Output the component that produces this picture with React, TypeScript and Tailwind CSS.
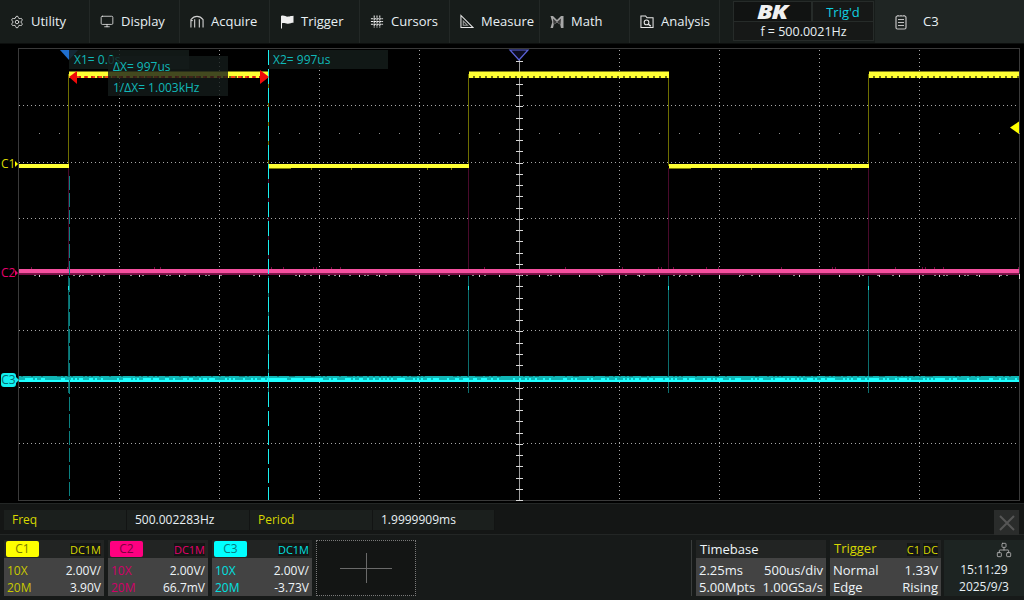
import React from 'react';
import { Settings, Monitor, Network } from 'lucide-react';

const noise = (i: number, seed: number) => {
  const v = Math.sin(i * 12.9898 + seed * 78.233) * 43758.5453;
  return v - Math.floor(v);
};

const range = (from: number, to: number, step: number) => {
  const out: number[] = [];
  for (let v = from; v <= to; v += step) out.push(v);
  return out;
};

const EDGES = [69, 269, 469, 669, 869];
const HIGH = [[69, 269], [469, 669], [869, 1019]];
const LOW = [[19, 69], [269, 469], [669, 869]];

// scope trace area, drawn in screen coordinates
function Scope() {
  return (
    <svg width="1024" height="459" viewBox="0 44 1024 459" className="block">
      <rect x="18.5" y="48.5" width="1001" height="452" fill="none" stroke="#3a3a3a" />
      {[105.5, 162.5, 218.5, 330.5, 387.5, 443.5].map((y) => (
        <line key={y} x1="19" x2="1019" y1={y} y2={y} stroke="#a8a8a8" strokeDasharray="1 3" />
      ))}
      {[119, 219, 319, 419, 619, 719, 819, 919].map((x) => (
        <line key={x} x1={x + 0.5} x2={x + 0.5} y1="50" y2="500" stroke="#a8a8a8" strokeDasharray="1 3" />
      ))}
      {range(39, 1019, 20).map((x) => (
        <rect key={x} x={x} y="133" width="1" height="1" fill="#8a8a8a" />
      ))}

      {/* centre axes */}
      <line x1="519.5" x2="519.5" y1="50" y2="500" stroke="#9c9c9c" />
      {range(50, 500, 11.25).map((y) => (
        <line key={y} x1="516" x2="523" y1={Math.round(y) + 0.5} y2={Math.round(y) + 0.5} stroke="#d8d8d8" />
      ))}
      {range(39, 1019, 20).map((x) => (
        <line key={x} x1={x + 0.5} x2={x + 0.5} y1="274" y2={(x - 19) % 100 === 0 ? 279 : 277} stroke="#d8d8d8" />
      ))}

      {/* coupling from the square wave edges */}
      {EDGES.map((x) => (
        <g key={x}>
          <line x1={x - 0.5} x2={x - 0.5} y1="74" y2="166" stroke="#6e6e00" />
          <line x1={x - 0.5} x2={x - 0.5} y1="168" y2="270" stroke="#4a0a2c" />
          <line x1={x - 0.5} x2={x - 0.5} y1="276" y2="393" stroke="#0b6e6e" />
          <line x1={x - 0.5} x2={x - 0.5} y1="286" y2="290" stroke="#19e8e8" />
        </g>
      ))}

      {/* C1 */}
      {HIGH.map(([a, b]) => (
        <g key={a}>
          <rect x={a} y="71.500" width={b - a} height="4.500" fill="#ffff33" />
          <rect x={a} y="76" width={b - a} height="2" fill="#6e6e10" />
          <line x1={a} x2={b} y1="77" y2="77" stroke="#ffff33" strokeWidth="2" strokeDasharray="4 2" />
        </g>
      ))}
      {LOW.map(([a, b], i) => (
        <g key={a}>
          <rect x={a} y="164" width={b - a} height="4" fill="#ffff33" />
          {i > 0 && <rect x={a} y="168" width="22" height="1" fill="#7d7d00" />}
          {i > 0 && range(a + 24, b - 2, 2).map((x, k) =>
            noise(k, 5) > 0.96 ? <rect key={x} x={x} y="168" width="1" height="2" fill="#7d7d00" /> : null,
          )}
        </g>
      ))}

      {/* C2 */}
      <rect x="19" y="269" width="1000" height="4.5" fill="#f5509f" />
      <rect x="19" y="273.5" width="1000" height="1.5" fill="#7a0b45" />
      {range(19, 1019, 3).map((x, i) =>
        noise(i, 1) > 0.82 ? <rect key={x} x={x} y="275" width="2" height="1" fill="#8a8a8a" /> : null,
      )}
      {range(19, 1019, 3).map((x, i) =>
        noise(i, 2) > 0.93 ? <rect key={x} x={x} y="267" width="1" height="2" fill="#7a0b45" /> : null,
      )}

      {/* C3 */}
      <rect x="19" y="376" width="1000" height="4" fill="#10b5b5" />
      <rect x="19" y="380" width="1000" height="2" fill="#1dffff" />
      {range(19, 1019, 2).map((x, i) =>
        noise(i, 3) > 0.55 ? <rect key={x} x={x} y="378" width="2" height="2" fill="#1dffff" /> : null,
      )}
      {range(19, 1019, 2).map((x, i) =>
        noise(i, 4) > 0.7 ? <rect key={x} x={x} y="376" width="2" height="1" fill="#0b7d7d" /> : null,
      )}

      {/* cursors */}
      <line x1="69.5" x2="69.5" y1="176" y2="500" stroke="#0a8080" strokeDasharray="14 3" />
      <line x1="268.5" x2="268.5" y1="50" y2="500" stroke="#19f0f0" strokeDasharray="15 4" />
      <line x1="77" x2="260" y1="77" y2="77" stroke="#f01010" strokeWidth="1.5" strokeDasharray="4 3" />
      <polygon points="69,77 77,71 77,84" fill="#f00a0a" />
      <polygon points="269,77 260,70 260,84" fill="#f00a0a" />

      {/* markers */}
      <polygon points="60,50 78,50 69,60" fill="#1f6fd0" />
      <polygon points="510,50 528,50 519,60" fill="#0c0c20" stroke="#5a62d8" strokeWidth="1.2" />
      <polygon points="1019,121.5 1019,134 1010,127.5" fill="#ffff00" />
    </svg>
  );
}

function AcquireIcon() {
  return (
    <svg width="15" height="15" viewBox="0 0 15 15" fill="none" stroke="#d0d0d0" strokeWidth="1.2">
      <path d="M1 14V5.5C3 3 5 2 7.5 2S12 3 14 5.5V14" />
      <path d="M5 14V5M10 14V5" />
      <path d="M1 6.5h2" />
    </svg>
  );
}

function FlagIcon() {
  return (
    <svg width="14" height="15" viewBox="0 0 14 15" fill="#eeeeee">
      <path d="M1 2c3-1.4 5 1 7 .6 2-.3 3.500-.8 5.500-.9v7c-2 0-3.500.7-5.500 1-2 .3-4-1.300-6-.4V14.500H1z" />
    </svg>
  );
}

function CursorsIcon() {
  return (
    <svg width="15" height="15" viewBox="0 0 15 15" stroke="#f0f0f0" strokeWidth="1.1">
      <path d="M4.500 1v13M7.500 1v13M10.500 1v13M1 4.500h13M1 7.500h13M1 10.500h13" strokeDasharray="2.500 .5" />
    </svg>
  );
}

function MeasureIcon() {
  return (
    <svg width="15" height="15" viewBox="0 0 15 15" fill="none" stroke="#e8e8e8" strokeWidth="1.1">
      <path d="M1 1v13h13z" />
      <path d="M3.500 7v4.500H8z" stroke="#9a9a9a" />
    </svg>
  );
}

function MathIcon() {
  return (
    <svg width="14" height="14" viewBox="0 0 14 14" fill="#a8a8a8">
      <path d="M0.500 1h2.500l4 4 4-4h2.500v12H11l-.8-3.500L7 7.500 3.800 9.500 3 13H.5l1.800-6z" />
      <path d="M3 3.500 7 7 3.500 9.500zM11 3.500 7 7l3.500 2.500z" fill="#3a3a3a" />
    </svg>
  );
}

function AnalysisIcon() {
  return (
    <svg width="15" height="15" viewBox="0 0 15 15" fill="none" stroke="#e8e8e8" strokeWidth="1.1">
      <path d="M1 14V1.500h5l1.500 2H14V14z" />
      <circle cx="7" cy="8.500" r="2.500" />
      <path d="M9 10.500l2.500 2" strokeWidth="1.500" />
    </svg>
  );
}

function BatteryIcon() {
  return (
    <svg width="12" height="16" viewBox="0 0 12 16" fill="none" stroke="#c0c0c0" strokeWidth="1.2">
      <rect x="1" y="2" width="10" height="13" rx="1.500" />
      <path d="M3 1v1M6 1v1M9 1v1M3 5.500h6M3 8.500h6M3 11.500h6" />
    </svg>
  );
}

const MENU = [
  { label: 'Utility', icon: <Settings size={14} color="#d8d8d8" strokeWidth={1.6} /> },
  { label: 'Display', icon: <Monitor size={15} color="#e8e8e8" strokeWidth={1.4} /> },
  { label: 'Acquire', icon: <AcquireIcon /> },
  { label: 'Trigger', icon: <FlagIcon /> },
  { label: 'Cursors', icon: <CursorsIcon /> },
  { label: 'Measure', icon: <MeasureIcon /> },
  { label: 'Math', icon: <MathIcon /> },
  { label: 'Analysis', icon: <AnalysisIcon /> },
];

function Header() {
  return (
    <div className="flex h-[44px] bg-[#171c1a] border-b border-[#0c0e0d]">
      {MENU.map((m) => (
        <div key={m.label} className="flex w-[90px] items-center gap-[7px] border-r border-[#232826] pl-[10px] text-[13px] text-[#e8f0f4]">
          <span className="flex w-[14px] justify-center">{m.icon}</span>
          <span>{m.label}</span>
        </div>
      ))}
      <div className="ml-[13px] mt-[1px] flex h-[40px] w-[141px] flex-col border border-[#262b29] bg-[#161817]">
        <div className="flex h-[20px] border-b border-[#262b29]">
          <div className="flex h-[19px] w-[79px] items-center justify-center border-r-2 border-[#262b29] bg-[#111312]">
            <span className="inline-block scale-x-125 text-[20px] font-extrabold italic leading-[19px] tracking-[-1px] text-[#f0f0f0]">BK</span>
          </div>
          <div className="flex-1 text-center text-[13px] leading-[21px] text-[#10d0e0]">Trig'd</div>
        </div>
        <div className="flex-1 text-center text-[12.5px] leading-[19px] text-[#e8f0f4]">f = 500.0021Hz</div>
      </div>
      <div className="ml-[1px] flex flex-1 items-center bg-[#1f2523] pl-[20px] text-[13px] text-[#e8f0f4]">
        <BatteryIcon />
        <span className="ml-[16px]">C3</span>
      </div>
    </div>
  );
}

function CursorLabels() {
  return (
    <>
      <div className="absolute left-[69px] top-[6px] h-[19px] w-[120px] bg-[#141c1a]/85 pl-[5px] text-[12px] leading-[19px] text-[#10b8b8]">X1= 0.0s</div>
      <div className="absolute left-[269px] top-[6px] h-[19px] w-[119px] bg-[#141c1a]/85 pl-[4px] text-[12px] leading-[19px] text-[#10b8b8]">X2= 997us</div>
      <div className="absolute left-[108px] top-[12px] h-[40px] w-[120px] bg-[#141c1a]/80 pl-[5px] text-[12px] text-[#10b8b8]">
        <div className="leading-[21px]">ΔX= 997us</div>
        <div className="leading-[21px]">1/ΔX= 1.003kHz</div>
      </div>
      <div className="absolute left-[1px] top-[111px] text-[12px] leading-[18px] text-[#d8d800]">C1</div>
      <div className="absolute left-[15px] top-[117px] h-0 w-0 border-y-[3px] border-l-[3px] border-y-transparent border-l-[#ffff00]" />
      <div className="absolute left-[1px] top-[220px] text-[12px] leading-[18px] text-[#e6006e]">C2</div>
      <div className="absolute left-[15px] top-[226px] h-0 w-0 border-y-[3px] border-l-[3px] border-y-transparent border-l-[#e6006e]" />
      <div className="absolute left-[1px] top-[329px] h-[14px] w-[15px] rounded-[3px] bg-[#12f0f0] text-center text-[12px] leading-[14px] text-[#076a70]">C3</div>
      <div className="absolute left-[16px] top-[333px] h-0 w-0 border-y-[3px] border-l-[3px] border-y-transparent border-l-[#12f0f0]" />
    </>
  );
}

function MeasureBar() {
  const cell = 'flex h-[20px] items-center border-r border-[#121413] bg-[#1b1f1d] pl-[8px] text-[12px]';
  return (
    <div className="flex h-[32px] items-start border-y border-[#232625] bg-[#141615] pl-[4px] pt-[6px]">
      <div className={`${cell} w-[123px] text-[#d8d800]`}>Freq</div>
      <div className={`${cell} w-[123px] text-[#e8f0f4]`}>500.002283Hz</div>
      <div className={`${cell} w-[123px] text-[#d8d800]`}>Period</div>
      <div className={`${cell} w-[122px] text-[#e8f0f4]`}>1.9999909ms</div>
      <div className="ml-auto mr-[5px] flex h-[25px] w-[25px] items-center justify-center bg-[#2a2c2b]">
        <svg width="18" height="18" viewBox="0 0 18 18" stroke="#565656" strokeWidth="2">
          <path d="M2 2l14 14M16 2L2 16" />
        </svg>
      </div>
    </div>
  );
}

interface ChannelProps {
  name: string;
  badge: string;
  tone: string;
  low: string;
  scale: string;
  offset: string;
}

function ChannelCard({ name, badge, tone, low, scale, offset }: ChannelProps) {
  return (
    <div className="h-[56px] w-[100px] bg-[#434343] text-[12px]">
      <div className="flex h-[18px] items-center justify-between bg-[#222423] pl-[2px] pr-[3px]">
        <div className={`h-[16px] w-[33px] rounded-[2px] text-center leading-[16px] ${badge}`}>{name}</div>
        <span className={`bg-[#141615] text-[11px] leading-[13px] ${tone}`}>DC1M</span>
      </div>
      <div className="flex justify-between px-[3px] pt-[4px] leading-[17px]">
        <span className={low}>10X</span>
        <span className="text-[#eef4f8]">{scale}</span>
      </div>
      <div className="flex justify-between px-[3px] leading-[17px]">
        <span className={low}>20M</span>
        <span className="text-[#eef4f8]">{offset}</span>
      </div>
    </div>
  );
}

function Footer() {
  return (
    <div className="flex h-[65px] items-start bg-[#171a19] pl-[4px] pt-[5px]">
      <div className="flex gap-[4px]">
        <ChannelCard name="C1" badge="bg-[#ffff00] text-[#7a7a00]" tone="text-[#d8d800]" low="text-[#c8c800]" scale="2.00V/" offset="3.90V" />
        <ChannelCard name="C2" badge="bg-[#ff0080] text-[#800040]" tone="text-[#e6006e]" low="text-[#d00068]" scale="2.00V/" offset="66.7mV" />
        <ChannelCard name="C3" badge="bg-[#00ffff] text-[#087a80]" tone="text-[#00e0e0]" low="text-[#00e0e0]" scale="2.00V/" offset="-3.73V" />
      </div>
      <div className="ml-[4px] flex h-[56px] w-[100px] items-center justify-center border border-dotted border-[#7a7a7a] bg-[#131514]">
        <svg width="52" height="30" viewBox="0 0 52 30" stroke="#6a6a6a">
          <path d="M0 15.500h52M26.500 0v30" />
        </svg>
      </div>
      <div className="ml-[275px] h-[56px] w-px bg-[#3a3d3c]" />
      <div className="ml-[4px] h-[56px] w-[130px] bg-[#434343] text-[13px] text-[#eef4f8]">
        <div className="h-[18px] bg-[#222423] pl-[4px] leading-[18px]">Timebase</div>
        <div className="flex justify-between px-[3px] pt-[4px] leading-[17px]">
          <span>2.25ms</span>
          <span>500us/div</span>
        </div>
        <div className="flex justify-between px-[3px] leading-[17px]">
          <span>5.00Mpts</span>
          <span>1.00GSa/s</span>
        </div>
      </div>
      <div className="ml-[4px] h-[56px] w-[111px] bg-[#434343] text-[13px] text-[#eef4f8]">
        <div className="flex h-[18px] items-center justify-between bg-[#222423] pl-[4px] pr-[3px] text-[#d8d800]">
          <span>Trigger</span>
          <span className="flex gap-[3px] text-[11px] leading-[13px]">
            <span className="bg-[#141615]">C1</span>
            <span className="bg-[#141615]">DC</span>
          </span>
        </div>
        <div className="flex justify-between px-[3px] pt-[4px] leading-[17px]">
          <span>Normal</span>
          <span>1.33V</span>
        </div>
        <div className="flex justify-between px-[3px] leading-[17px]">
          <span>Edge</span>
          <span>Rising</span>
        </div>
      </div>
      <div className="ml-[3px] flex h-[56px] flex-1 flex-col items-center bg-[#1d2422] text-[12px] text-[#e8f0f4]">
        <Network size={16} color="#b0b0b0" strokeWidth={1.3} className="mb-[3px] mr-[12px] mt-[2px] self-end" />
        <div className="leading-[17px]">15:11:29</div>
        <div className="leading-[17px]">2025/9/3</div>
      </div>
    </div>
  );
}

export default function App() {
  return (
    <div className="flex h-[600px] w-[1024px] flex-col overflow-hidden bg-black font-['Open_Sans',sans-serif]">
      <Header />
      <div className="relative h-[459px]">
        <Scope />
        <CursorLabels />
      </div>
      <MeasureBar />
      <Footer />
    </div>
  );
}
